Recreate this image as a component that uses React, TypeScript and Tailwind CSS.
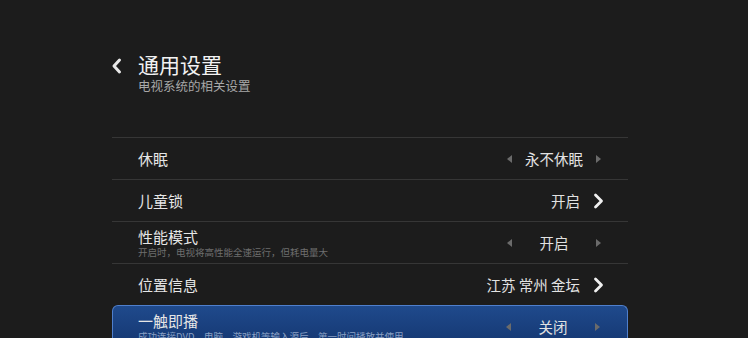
import React from "react";

type Row = {
  label: string;
  sub?: string;
  value: string;
  kind: "arrows" | "chevron";
  active?: boolean;
};

const rows: Row[] = [
  { label: "休眠", value: "永不休眠", kind: "arrows" },
  { label: "儿童锁", value: "开启", kind: "chevron" },
  { label: "性能模式", sub: "开启时，电视将高性能全速运行，但耗电量大", value: "开启", kind: "arrows" },
  { label: "位置信息", value: "江苏 常州 金坛", kind: "chevron" },
  {
    label: "一触即播",
    sub: "成功连接DVD、电脑、游戏机等输入源后，第一时间播放并使用",
    value: "关闭",
    kind: "arrows",
    active: true,
  },
];

const Tri = ({ dir }: { dir: "l" | "r" }) => (
  <svg width="5" height="8" viewBox="0 0 5 8" className="text-[#6b6b6b]">
    {dir === "l" ? <path d="M5 0 L0 4 L5 8 Z" fill="currentColor" /> : <path d="M0 0 L5 4 L0 8 Z" fill="currentColor" />}
  </svg>
);

const Chevron = () => (
  <svg width="11" height="16" viewBox="0 0 11 16" className="text-[#f0f0f0]">
    <path d="M2.5 2 L8.5 8 L2.5 14" fill="none" stroke="currentColor" strokeWidth={2.8} strokeLinecap="round" strokeLinejoin="round" />
  </svg>
);

const SettingRow = ({ row }: { row: Row }) => {
  const base = row.active
    ? "h-[42px] rounded-t-[6px] border border-b-0 border-[#4f7fcc] bg-gradient-to-b from-[#1f4a8c] to-[#143670] pl-[25px] pr-[24px]"
    : "h-[42px] border-t border-[#363636] pl-[26px] pr-[24px]";
  return (
    <div className={`flex items-center justify-between ${base}`}>
      <div className="flex flex-col">
        <span className="text-[15px] leading-[18px] text-[#e6e6e6]">{row.label}</span>
        {row.sub && (
          <span className={`text-[9.5px] leading-[12px] whitespace-nowrap ${row.active ? "text-[#8aa0c4]" : "text-[#6e6e6e]"}`}>
            {row.sub}
          </span>
        )}
      </div>
      {row.kind === "arrows" ? (
        <div className="flex w-[100px] items-center justify-between pr-[3px] pl-[3px]">
          <Tri dir="l" />
          <span className="text-[14.5px] text-[#e2e2e2]">{row.value}</span>
          <Tri dir="r" />
        </div>
      ) : (
        <div className="flex items-center gap-[13px]">
          <span className="text-[14.5px] text-[#e2e2e2]">{row.value}</span>
          <Chevron />
        </div>
      )}
    </div>
  );
};

export default function App() {
  return (
    <div
      className="h-[338px] w-[748px] overflow-hidden bg-[#1c1c1c]"
      style={{ fontFamily: '"Noto Sans CJK SC", "Noto Sans", sans-serif' }}
    >
      <div className="flex gap-[14px] pt-[51px] pl-[110px]">
        <svg width="14" height="18" viewBox="0 0 14 18" className="mt-[6px] text-[#e8e8e8]">
          <path d="M9.5 3 L4 9 L9.5 15" fill="none" stroke="currentColor" strokeWidth={3} strokeLinecap="round" strokeLinejoin="round" />
        </svg>
        <div className="flex flex-col">
          <span className="text-[21px] leading-[26px] text-[#f2f2f2]">通用设置</span>
          <span className="mt-[1px] text-[12.5px] leading-[15px] text-[#a8a8a8]">电视系统的相关设置</span>
        </div>
      </div>
      <div className="mt-[44px] ml-[112px] w-[516px]">
        {rows.map((r) => (
          <SettingRow key={r.label} row={r} />
        ))}
      </div>
    </div>
  );
}
